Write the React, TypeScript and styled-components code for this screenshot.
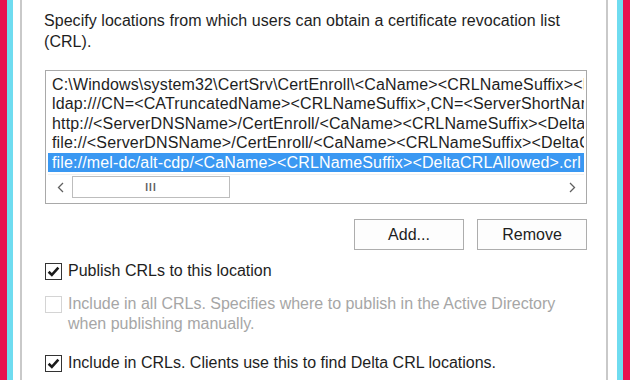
import styled, { createGlobalStyle } from "styled-components";

const GlobalStyle = createGlobalStyle`
    html, body {
        margin: 0;
        padding: 0;
        background: #ffffff;
    }

    body {
        font-family: "Liberation Sans", Arial, sans-serif;
    }
`;

const Frame = styled.div`
    display: flex;
    width: 630px;
    height: 380px;
    overflow: hidden;
    background: #ffffff;
`;

const Stripe = styled.div<{ $color: string; $w: number }>`
    flex: 0 0 ${(p) => p.$w}px;
    background: ${(p) => p.$color};
`;

const Dialog = styled.div`
    flex: 1;
    display: flex;
    flex-direction: column;

    border-left: 2px solid #c9c9c9;
    border-right: 2px solid #c9c9c9;

    padding: 10px 17px 0 22px;

    color: #1e1e1e;
    font-size: 16px;
`;

const Description = styled.div`
    line-height: 21px;
    letter-spacing: 0.05px;
`;

const ListBox = styled.div`
    margin-top: 18px;
    margin-left: 1px;
    width: 542px;
    height: 134px;

    border: 1px solid #a9a9a9;
    background: #ffffff;

    display: flex;
    flex-direction: column;
    padding: 4px 2px 2px;
    box-sizing: border-box;
`;

const Rows = styled.div`
    display: flex;
    flex-direction: column;
    overflow: hidden;
`;

const Row = styled.div<{ $selected?: boolean }>`
    height: 19.4px;
    line-height: 19.4px;
    padding-left: 4px;
    white-space: nowrap;
    overflow: hidden;
    letter-spacing: 0.15px;

    background: ${(p) => (p.$selected ? "#3a98f2" : "transparent")};
    color: ${(p) => (p.$selected ? "#ffffff" : "#1e1e1e")};
`;

const ScrollBar = styled.div`
    margin-top: 2px;
    height: 25px;
    display: flex;
    align-items: center;
    background: #ffffff;
    border-top: 1px solid #f0f0f0;
`;

const Arrow = styled.div`
    flex: 0 0 24px;
    display: flex;
    align-items: center;
    justify-content: center;
`;

const Thumb = styled.div`
    width: 158px;
    height: 22px;
    border: 1px solid #bdbdbd;
    box-sizing: border-box;
    display: flex;
    align-items: center;
    justify-content: center;
    font-size: 10px;
    color: #606060;
    letter-spacing: 1px;
    font-weight: bold;
`;

const Track = styled.div`
    flex: 1;
`;

const ButtonRow = styled.div`
    display: flex;
    justify-content: flex-end;
    gap: 13px;
    margin-top: 15px;
    width: 543px;
`;

const Button = styled.div`
    width: 110px;
    height: 31px;
    box-sizing: border-box;
    border: 1px solid #adadad;
    background: #fdfdfd;
    display: flex;
    align-items: center;
    justify-content: center;
    font-size: 16px;
    color: #1e1e1e;
`;

const Option = styled.div<{ $top: number; $disabled?: boolean }>`
    display: flex;
    align-items: flex-start;
    gap: 6px;
    margin-top: ${(p) => p.$top}px;
    margin-left: 1px;
    line-height: 20px;
    color: ${(p) => (p.$disabled ? "#a6a6a6" : "#1e1e1e")};
`;

const Box = styled.div<{ $disabled?: boolean }>`
    flex: 0 0 17px;
    height: 17px;
    margin-top: 2px;
    box-sizing: border-box;
    border: 1px solid ${(p) => (p.$disabled ? "#d4d4d4" : "#333333")};
    background: #ffffff;
    display: flex;
    align-items: center;
    justify-content: center;
`;

const Check = () => (
    <svg width="13" height="13" viewBox="0 0 12 12">
        <path
            d="M1.5 6.2 L4.5 9.2 L10.5 2.5"
            fill="none"
            stroke="#1a1a1a"
            strokeWidth="2.4"
        />
    </svg>
);

const Chevron = ({ dir }: { dir: "left" | "right" }) => (
    <svg width="7" height="11" viewBox="0 0 7 11">
        <path
            d={dir === "left" ? "M6 1 L1.5 5.5 L6 10" : "M1 1 L5.5 5.5 L1 10"}
            fill="none"
            stroke="#606060"
            strokeWidth="1.3"
        />
    </svg>
);

const rows = [
    "C:\\Windows\\system32\\CertSrv\\CertEnroll\\<CaName><CRLNameSuffix><DeltaCRLAllowed>.crl",
    "ldap:///CN=<CATruncatedName><CRLNameSuffix>,CN=<ServerShortName>,CN=CDP",
    "http://<ServerDNSName>/CertEnroll/<CaName><CRLNameSuffix><DeltaCRLAllowed>.crl",
    "file://<ServerDNSName>/CertEnroll/<CaName><CRLNameSuffix><DeltaCRLAllowed>.crl",
    "file://mel-dc/alt-cdp/<CaName><CRLNameSuffix><DeltaCRLAllowed>.crl",
];

export default function App() {
    return (
        <>
            <GlobalStyle />
            <Frame>
                <Stripe $color="#e8104f" $w={7} />
                <Stripe $color="#6fdcf0" $w={6} />
                <Stripe $color="#ffffff" $w={7} />

                <Dialog>
                    <Description>
                        Specify locations from which users can obtain a certificate revocation list
                        <br />
                        (CRL).
                    </Description>

                    <ListBox>
                        <Rows>
                            {rows.map((r, i) => (
                                <Row key={i} $selected={i === rows.length - 1}>
                                    {r}
                                </Row>
                            ))}
                        </Rows>
                        <ScrollBar>
                            <Arrow>
                                <Chevron dir="left" />
                            </Arrow>
                            <Thumb>III</Thumb>
                            <Track />
                            <Arrow>
                                <Chevron dir="right" />
                            </Arrow>
                        </ScrollBar>
                    </ListBox>

                    <ButtonRow>
                        <Button>Add...</Button>
                        <Button>Remove</Button>
                    </ButtonRow>

                    <Option $top={11}>
                        <Box>
                            <Check />
                        </Box>
                        <span>Publish CRLs to this location</span>
                    </Option>

                    <Option $top={13} $disabled>
                        <Box $disabled />
                        <span>
                            Include in all CRLs. Specifies where to publish in the Active Directory
                            <br />
                            when publishing manually.
                        </span>
                    </Option>

                    <Option $top={19}>
                        <Box>
                            <Check />
                        </Box>
                        <span>Include in CRLs. Clients use this to find Delta CRL locations.</span>
                    </Option>
                </Dialog>

                <Stripe $color="#ffffff" $w={9} />
                <Stripe $color="#6fdcf0" $w={6} />
                <Stripe $color="#e8104f" $w={7} />
            </Frame>
        </>
    );
}
